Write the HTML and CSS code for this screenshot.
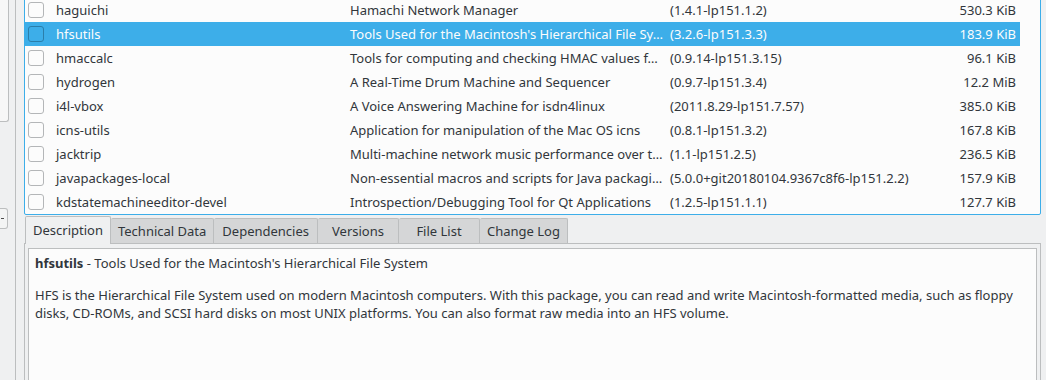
FILE: index.html
```html
<!DOCTYPE html>
<html lang="en">
  <head>
    <meta charset="UTF-8" />
    <title>YaST Software - Package List</title>
    <link rel="stylesheet" href="styles.css">
  </head>
  <body>
    <div class="window">
      <div class="side">
        <div class="side-list"></div>
        <div class="side-button"><span class="side-arrow"></span></div>
      </div>

      <div class="main">
        <div class="package-list">
          <div class="rows">
            <div class="row">
              <span class="cell check"><span class="box"></span></span>
              <span class="cell name">haguichi</span>
              <span class="cell summary">Hamachi Network Manager</span>
              <span class="cell version">(1.4.1-lp151.1.2)</span>
              <span class="cell size">530.3 KiB</span>
            </div>
            <div class="row selected">
              <span class="cell check"><span class="box"></span></span>
              <span class="cell name">hfsutils</span>
              <span class="cell summary">Tools Used for the Macintosh's Hierarchical File Sy…</span>
              <span class="cell version">(3.2.6-lp151.3.3)</span>
              <span class="cell size">183.9 KiB</span>
            </div>
            <div class="row">
              <span class="cell check"><span class="box"></span></span>
              <span class="cell name">hmaccalc</span>
              <span class="cell summary">Tools for computing and checking HMAC values f…</span>
              <span class="cell version">(0.9.14-lp151.3.15)</span>
              <span class="cell size">96.1 KiB</span>
            </div>
            <div class="row">
              <span class="cell check"><span class="box"></span></span>
              <span class="cell name">hydrogen</span>
              <span class="cell summary">A Real-Time Drum Machine and Sequencer</span>
              <span class="cell version">(0.9.7-lp151.3.4)</span>
              <span class="cell size">12.2 MiB</span>
            </div>
            <div class="row">
              <span class="cell check"><span class="box"></span></span>
              <span class="cell name">i4l-vbox</span>
              <span class="cell summary">A Voice Answering Machine for isdn4linux</span>
              <span class="cell version">(2011.8.29-lp151.7.57)</span>
              <span class="cell size">385.0 KiB</span>
            </div>
            <div class="row">
              <span class="cell check"><span class="box"></span></span>
              <span class="cell name">icns-utils</span>
              <span class="cell summary">Application for manipulation of the Mac OS icns</span>
              <span class="cell version">(0.8.1-lp151.3.2)</span>
              <span class="cell size">167.8 KiB</span>
            </div>
            <div class="row">
              <span class="cell check"><span class="box"></span></span>
              <span class="cell name">jacktrip</span>
              <span class="cell summary">Multi-machine network music performance over t…</span>
              <span class="cell version">(1.1-lp151.2.5)</span>
              <span class="cell size">236.5 KiB</span>
            </div>
            <div class="row">
              <span class="cell check"><span class="box"></span></span>
              <span class="cell name">javapackages-local</span>
              <span class="cell summary">Non-essential macros and scripts for Java packagi…</span>
              <span class="cell version">(5.0.0+git20180104.9367c8f6-lp151.2.2)</span>
              <span class="cell size">157.9 KiB</span>
            </div>
            <div class="row">
              <span class="cell check"><span class="box"></span></span>
              <span class="cell name">kdstatemachineeditor-devel</span>
              <span class="cell summary">Introspection/Debugging Tool for Qt Applications</span>
              <span class="cell version">(1.2.5-lp151.1.1)</span>
              <span class="cell size">127.7 KiB</span>
            </div>
          </div>
          <div class="scroll-gap"></div>
        </div>

        <div class="tabs">
          <div class="tab active">Description</div>
          <div class="tab">Technical Data</div>
          <div class="tab">Dependencies</div>
          <div class="tab">Versions</div>
          <div class="tab">File List</div>
          <div class="tab">Change Log</div>
        </div>
        <div class="tab-pane">
          <div class="details">
            <p class="details-title"><b>hfsutils</b> - Tools Used for the Macintosh's Hierarchical File System</p>
            <p>HFS is the Hierarchical File System used on modern Macintosh computers. With this package, you can read and write Macintosh-formatted media, such as floppy disks, CD-ROMs, and SCSI hard disks on most UNIX platforms. You can also format raw media into an HFS volume.</p>
          </div>
        </div>
      </div>
    </div>
  </body>
</html>
```

FILE: styles.css
```css
html,
body {
  margin: 0;
  height: 380px;
  overflow: hidden;
}

body {
  background-color: #eff0f1;
  color: #31363b;
  font-family: "Noto Sans", "DejaVu Sans", sans-serif;
  font-size: 13px;
}

.window {
  display: flex;
  height: 380px;
}

/* left panel, mostly cut off */
.side {
  width: 15px;
  border-right: 1px solid #bcbebf;
  flex-shrink: 0;
}

.side-list {
  width: 8px;
  height: 121px;
  background-color: #f7f7f7;
  border-right: 1px solid #bcbebf;
  border-bottom: 1px solid #bcbebf;
  border-bottom-right-radius: 3px;
}

.side-button {
  width: 7px;
  height: 19px;
  margin-top: 86px;
  background-color: #f3f4f4;
  border-right: 1px solid #bcbebf;
  border-top: 1px solid #bcbebf;
  border-bottom: 1px solid #bcbebf;
  border-radius: 0 3px 3px 0;
  display: flex;
  align-items: center;
}

.side-arrow {
  width: 3px;
  height: 1px;
  margin-left: 1px;
  background-color: #4d4d4d;
}

.main {
  flex: 1;
  padding: 0 5px 0 8px;
  display: flex;
  flex-direction: column;
}

.package-list {
  display: flex;
  margin-top: -3px;
  background-color: #fcfcfc;
  border: 1px solid #3daee9;
  border-radius: 2px;
}

.rows {
  flex: 1;
}

.scroll-gap {
  width: 20px;
}

.row {
  display: grid;
  grid-template-columns: 27px 294px 320px 1fr 100px;
  height: 24px;
  align-items: center;
  white-space: nowrap;
}

.row.selected {
  background-color: #3daee9;
  color: #fcfcfc;
}

.cell {
  overflow: hidden;
  padding: 0 4px;
}

.check {
  padding: 0 0 0 3px;
  display: flex;
}

.box {
  width: 14px;
  height: 14px;
  border: 1px solid #b4b6b8;
  border-radius: 3px;
  background-color: #fcfcfc;
}

.selected .box {
  border-color: #2b7eaa;
  background-color: #3daee9;
}

.size {
  text-align: right;
}

/* tab widget */
.tabs {
  display: flex;
  margin-top: 2px;
  padding-left: 1px;
  align-items: flex-end;
  height: 27px;
  position: relative;
  z-index: 1;
}

.tab {
  height: 24px;
  line-height: 24px;
  margin-bottom: 1px;
  min-width: 66px;
  padding: 0 7px;
  text-align: center;
  background-color: #d5d6d7;
  border: 1px solid #bcbebf;
  border-bottom: none;
  border-left: none;
  border-radius: 2px 2px 0 0;
}

.tab:nth-child(3) {
  padding: 0 8px;
}

.tab.active {
  height: 27px;
  line-height: 26px;
  margin-bottom: 0;
  background-color: #eff0f1;
  border-left: 1px solid #bcbebf;
}

.tab-pane {
  flex: 1;
  margin-top: -1px;
  border: 1px solid #bcbebf;
  border-bottom: none;
  padding: 4px 3px 0 3px;
  display: flex;
}

.details {
  flex: 1;
  background-color: #fcfcfc;
  border: 1px solid #bcbebf;
  border-bottom: none;
  padding: 5px 8px 0 6px;
  line-height: 18px;
}

.details p {
  margin: 0 0 14px 0;
}

.details-title b {
  font-weight: bold;
}
```
